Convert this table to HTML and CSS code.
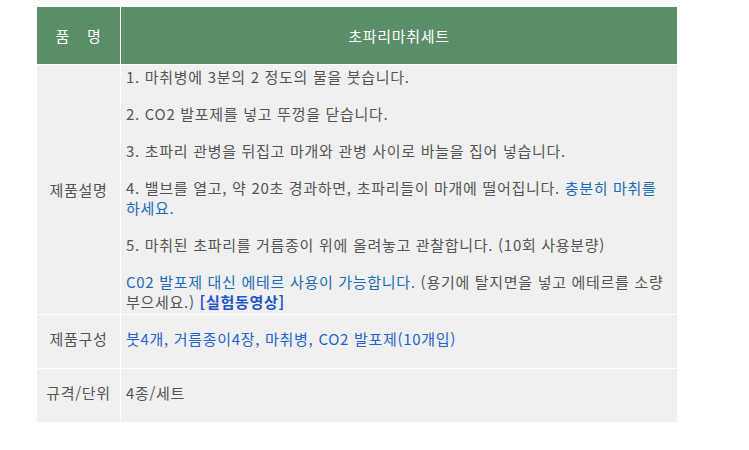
FILE: index.html
```html
<!DOCTYPE html>
<html lang="ko">
<head>
<meta charset="utf-8">
<link rel="stylesheet" href="styles.css">
</head>
<body>
<table class="spec">
  <thead>
    <tr>
      <th class="label head-label">품<span class="gap"></span>명</th>
      <th class="value head-value">초파리마취세트</th>
    </tr>
  </thead>
  <tbody>
    <tr class="row-desc">
      <td class="label">제품설명</td>
      <td class="value">
        <p>1. 마취병에 3분의 2 정도의 물을 붓습니다.</p>
        <p>2. CO2 발포제를 넣고 뚜껑을 닫습니다.</p>
        <p>3. 초파리 관병을 뒤집고 마개와 관병 사이로 바늘을 집어 넣습니다.</p>
        <p>4. 밸브를 열고, 약 20초 경과하면, 초파리들이 마개에 떨어집니다. <span class="note">충분히 마취를 하세요.</span></p>
        <p>5. 마취된 초파리를 거름종이 위에 올려놓고 관찰합니다. (10회 사용분량)</p>
        <p><span class="note">C02 발포제 대신 에테르 사용이 가능합니다.</span> (용기에 탈지면을 넣고 에테르를 소량 부으세요.) <a class="video">[실험동영상]</a></p>
      </td>
    </tr>
    <tr class="row-comp">
      <td class="label">제품구성</td>
      <td class="value"><span class="parts">붓4개, 거름종이4장, 마취병, CO2 발포제(10개입)</span></td>
    </tr>
    <tr class="row-unit">
      <td class="label">규격/단위</td>
      <td class="value">4종/세트</td>
    </tr>
  </tbody>
</table>
</body>
</html>
```

FILE: styles.css
```css
html, body {
  margin: 0;
  padding: 0;
  background: #ffffff;
}

body {
  padding: 7px 0 0 37px;
  font-family: "Noto Sans CJK KR", "Noto Sans", sans-serif;
  font-size: 15px;
  letter-spacing: 0.7px;
  color: #555555;
}

.spec {
  width: 640px;
  border-collapse: collapse;
  table-layout: fixed;
}

.spec th,
.spec td {
  border: 1px solid #ffffff;
  padding: 0;
  line-height: 20px;
}

.spec tr:first-child th {
  border-top: none;
}

.spec th:first-child,
.spec td:first-child {
  border-left: none;
}

.spec th:last-child,
.spec td:last-child {
  border-right: none;
}

.spec tbody tr:last-child td {
  border-bottom: none;
}

.spec thead th {
  background: #598e69;
  color: #ffffff;
  font-weight: normal;
  height: 57px;
  text-align: center;
  vertical-align: middle;
}

.spec .label {
  width: 83px;
  text-align: center;
  vertical-align: middle;
}

.head-label .gap {
  display: inline-block;
  width: 17px;
}

.spec tbody td {
  background: #f0f0f0;
}

.spec tbody td.value {
  padding-left: 5px;
  padding-right: 12px;
  text-align: left;
}

.row-desc td.value {
  padding-top: 2px;
  padding-bottom: 2px;
}

.row-desc p {
  margin: 0 0 17px;
}

.row-desc p:last-child {
  margin-bottom: 0;
}

.row-comp td {
  height: 47px;
  padding-bottom: 6px;
}

.row-unit td {
  height: 48px;
  padding-bottom: 5px;
}

.note {
  color: #1b6cb8;
}

.video {
  color: #1e55c8;
  font-weight: bold;
  text-decoration: none;
}

.parts {
  color: #2463cf;
}
```
